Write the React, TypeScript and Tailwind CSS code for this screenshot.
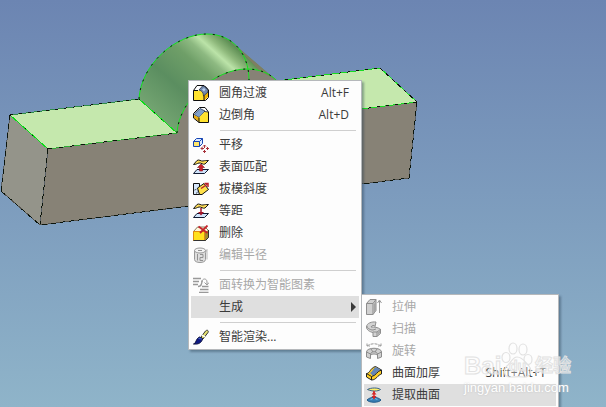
import React from 'react';

interface MenuEntry {
  label: string;
  icon?: React.ReactNode;
  shortcut?: string;
  disabled?: boolean;
  active?: boolean;
  children?: MenuEntry[];
}

const Icon: React.FC<{ children: React.ReactNode }> = ({ children }) => (
  <svg viewBox="0 0 16 16" className="h-4 w-4 shrink-0" fill="none" aria-hidden="true">
    {children}
  </svg>
);

const FilletIcon = () => (
  <Icon>
    <path d="M.5 5.5 5 .5h6l4.500 4.500v7L12 15.500H.5z" fill="#fff" />
    <path d="M1 5.500h5c3 0 4.500 2 4.500 5V15H1z" fill="#ffe22e" />
    <path d="M10.500 10.500 15 6v6l-3.500 3.500h-1z" fill="#f0b400" />
    <path d="M6 5 9.500 1c3.500 0 5.500 2 5.500 6l-4.500 4C10.500 8 9 5.500 6 5z" fill="#7389ae" stroke="#26324a" strokeWidth=".8" />
    <path d="M9 4.500 11 3l1.500 1.500-1.500 2z" fill="#b9cfec" />
    <path d="M.5 15.500v-10L4 .5h7l4.500 4.500v7.500l-3 3zM.5 5.500H5M11 10.500v5" stroke="#0d0d0d" />
  </Icon>
);

const ChamferIcon = () => (
  <Icon>
    <path d="M.5 8.500V6L6 .5h6l3.500 4.500v10.500H6L.5 11z" fill="#fff" />
    <path d="M1 7.500 7 1.500l5 2.500-6 6.500z" fill="#7f9fcb" stroke="#22324f" strokeWidth=".8" />
    <path d="M6 10.500 11.500 5H15v10H6z" fill="#ffe22e" />
    <path d="M1 8l5 2.500V15l-5-4z" fill="#e8ac10" />
    <path d="M.5 11V6.500L6.500.5H12l3.500 4.500v10.500H6zM6 10.500v5" stroke="#0d0d0d" />
    <path d="M11.500 4.500 15 5" stroke="#0d0d0d" strokeWidth=".8" />
  </Icon>
);

const MoveIcon = () => (
  <Icon>
    <path d="M.5 4.500l3-3h6v5l-3 3h-6z" fill="#dceaff" stroke="#1746b4" />
    <path d="M1 5h5v4H1z" fill="#ffe76b" />
    <path d="M.5 4.500h6v5M6.500 4.500l3-3" stroke="#1746b4" />
    <path d="M11.500 8v3M11.500 13v3M8 11.500h3M13 11.500h3" stroke="#a8303a" />
    <path d="M10 9.500 11.500 8 13 9.500M10 14l1.500 1.500L13 14M9.500 10 8 11.500 9.500 13M14 10l1.500 1.500L14 13" stroke="#a8303a" />
  </Icon>
);

const Sheets = () => (
  <>
    <path d="M.5 5.500 4 1.500C6 0 8 2.500 10 2c2-.5 3-.5 5.500-.5L12 5c-2 1-4-1.500-6-1-2 .5-3 1.500-5.500 1.500z" fill="#ffdd57" stroke="#1a1a1a" />
    <path d="M.5 14.500 4 10.500h11.500l-4 4z" fill="#cfe4fb" stroke="#111b33" />
  </>
);

const MatchIcon = () => (
  <Icon>
    <Sheets />
    <path d="M8 5 4.500 8.500h2V12h3V8.500h2z" fill="#c9202b" stroke="#8c101c" strokeWidth=".6" />
  </Icon>
);

const OffsetIcon = () => (
  <Icon>
    <Sheets />
    <path d="M8 5v4" stroke="#a3152a" strokeWidth="1.500" />
    <path d="M5 9h6l-3 3.500z" fill="#a3152a" />
  </Icon>
);

const DraftIcon = () => (
  <Icon>
    <path d="M.5 2.500h6v11h-6z" fill="#d6e7fb" stroke="#111" />
    <path d="M4.500 7 11 2.500l4.500 6-6.500 5H6.500z" fill="#ffe04a" stroke="#111" />
    <path d="M.5 9.500 4 8M3 13.500l2-4" stroke="#111" strokeDasharray="1 1" />
    <path d="M8 7.500 14 3.500M11.500 2.500H15V6" stroke="#b91f2a" strokeWidth="1.500" />
  </Icon>
);

const DeleteIcon = () => (
  <Icon>
    <path d="M.5 6.500 4.500 2H12l3.500 3.500v7l-3 3H.5z" fill="#fff7dc" stroke="#6b5a3a" strokeWidth=".8" />
    <path d="M.5 6.500h11v9H.5z" fill="#ffe01e" stroke="#e08a12" />
    <path d="M12 7l3.500-2v7.500l-3 3H12z" fill="#a08a2e" />
    <path d="M.5 15.500h12l3-3V5" stroke="#333" />
    <path d="M5.500 1.500 14.500 8M14.500.5 7 8" stroke="#c4232a" strokeWidth="1.800" />
  </Icon>
);

const RadiusIcon = () => (
  <Icon>
    <path d="M1.500 3.500v9c0 4 11 4 11 0v-9" fill="#dedede" stroke="#999" />
    <ellipse cx="7" cy="3.500" rx="5.500" ry="2.500" fill="#f4f4f4" stroke="#999" />
    <path d="M4.500 7v6.500M7 7.500h3v3H7v3h3M5 3.500h4" stroke="#929292" />
    <path d="M12.500 6 14 2.500v10" stroke="#bbb" />
  </Icon>
);

const ConvertIcon = () => (
  <Icon>
    <path d="M0 1.500h8M0 4.500h6M0 7.500h5M5 9.500c3 0 4-3 4-6" stroke="#999" strokeWidth="1.400" />
    <path d="M9 5c0-4 5-4 5 0v2M11.500 5.500 14 8l2-2.500" stroke="#999" />
    <path d="M9 9.500h6.500M7 12.500h8.500M6 15.500h9.500" stroke="#999" strokeWidth="1.500" />
  </Icon>
);

const BrushIcon = () => (
  <Icon>
    <path d="M8 8l4.500-6c1.500-1.500 3.500-.5 2.500 1.500L10 10z" fill="#e4e070" stroke="#333" />
    <path d="M9 6l3 2" stroke="#fff" strokeWidth="1.500" />
    <path d="M.5 15c3-1 2-5 6-7l3 2c-1 4-4 5.500-9 5z" fill="#101b85" stroke="#090d3b" />
    <path d="M5.500 9.500 9 10" stroke="#4968d2" />
  </Icon>
);

const ExtrudeIcon = () => (
  <Icon>
    <path d="M.5 4.500 4 .5h6v11l-3 4H.5z" fill="#d0d0d0" stroke="#8d8d8d" />
    <path d="M.5 4.500H7v11M7 4.500l3-4" stroke="#8d8d8d" />
    <path d="M8 5l2-3v9l-2 3z" fill="#a5a5a5" />
    <path d="M13.500 14V2M11.500 4l2-3 2 3" stroke="#999" />
  </Icon>
);

const SweepIcon = () => (
  <Icon>
    <path d="M9 5.500C9 4 6 4 5 6c3 0 7 0 9.500 2.500v4L11 15.500H7v-4C4 11 .5 9 .5 6 .5 2 6 .5 10 1z" fill="#d3d3d3" stroke="#8e8e8e" />
    <path d="M7 11h4v4M11 11l4-3M1 5c0 2 3 4 6 4l3-1" stroke="#8e8e8e" />
    <path d="M12 11l2-2v3l-2 2z" fill="#aaa" />
  </Icon>
);

const RevolveIcon = () => (
  <Icon>
    <path d="M1 3c4-3 10-3 14 0M1 .5V3h3M15 .5V3h-3" stroke="#999" strokeDasharray="3 1" />
    <path d="M.5 9c0-5 15-5 15 0v5l-4 1.500v-3c-1-2-6-2-7 0v3L.5 14z" fill="#d0d0d0" stroke="#8c8c8c" />
    <path d="M.5 9l4 2v4M15.500 9l-4 2v4M4.500 11c1-3 6-3 7 0M5 6l2 3M11 6 9 9" stroke="#8c8c8c" />
  </Icon>
);

const ThickenIcon = () => (
  <Icon>
    <path d="M.5 8.500C4 8.500 4 3 9.500 1.500l6 3.500v4c-4 1-5 6-10 6l-5-3z" fill="#ffcf24" stroke="#222" />
    <path d="M4 8C7 6.500 7 3 10 2l5 3c-4 1-5 5-8 6z" fill="#6485b5" />
    <path d="M.5 8.500 5.500 11.500C10 11 11 6 15.500 5M5.500 11.500V15" stroke="#222" />
  </Icon>
);

const ExtractIcon = () => (
  <Icon>
    <path d="M1.500 2.500C5 .5 12 .5 14.500 2.500 12 4.500 6 4.500 1.500 2.500z" fill="#fff06a" stroke="#39628b" />
    <path d="M1 13c3-3.500 11-3.500 14 0-2 3-12 3-14 0z" fill="#397eb4" stroke="#205b8b" />
    <path d="M4.500 13c1-2 6-2 7 0" stroke="#7cc4ee" />
    <path d="M8 4v8" stroke="#d52626" strokeWidth="1.500" />
    <path d="M5.500 7.500 8 4.500l2.500 3zM5.500 9 8 12l2.500-3z" fill="#d52626" />
  </Icon>
);

const generateMenu: MenuEntry[] = [
  { label: '拉伸', icon: <ExtrudeIcon />, disabled: true },
  { label: '扫描', icon: <SweepIcon />, disabled: true },
  { label: '旋转', icon: <RevolveIcon />, disabled: true },
  { label: '曲面加厚', icon: <ThickenIcon />, shortcut: 'Shift+Alt+T' },
  { label: '提取曲面', icon: <ExtractIcon />, active: true },
];

const menuGroups: MenuEntry[][] = [
  [
    { label: '圆角过渡', icon: <FilletIcon />, shortcut: 'Alt+F' },
    { label: '边倒角', icon: <ChamferIcon />, shortcut: 'Alt+D' },
  ],
  [
    { label: '平移', icon: <MoveIcon /> },
    { label: '表面匹配', icon: <MatchIcon /> },
    { label: '拔模斜度', icon: <DraftIcon /> },
    { label: '等距', icon: <OffsetIcon /> },
    { label: '删除', icon: <DeleteIcon /> },
    { label: '编辑半径', icon: <RadiusIcon />, disabled: true },
  ],
  [
    { label: '面转换为智能图素', icon: <ConvertIcon />, disabled: true },
    { label: '生成', active: true, children: generateMenu },
  ],
  [{ label: '智能渲染...', icon: <BrushIcon /> }],
];

const MenuItem: React.FC<{ entry: MenuEntry }> = ({ entry }) => (
  <li className="relative">
    <button
      type="button"
      disabled={entry.disabled}
      className={`flex h-[22px] w-full items-center gap-[10px] pl-[2px] text-left whitespace-nowrap ${entry.children ? 'pr-[3px]' : 'pr-[10px]'} ${entry.active ? 'bg-[#dfdfdf]' : ''} ${entry.disabled ? 'text-[#a8a8a8]' : 'text-[#3b3b3b]'}`}
    >
      {entry.icon || <span className="w-4 shrink-0" />}
      <span className="flex-1">{entry.label}</span>
      {entry.shortcut && <span>{entry.shortcut}</span>}
      {entry.children && (
        <svg viewBox="0 0 5 10" className="h-[10px] w-[5px]" aria-hidden="true">
          <path d="M0 0l5 5-5 5z" fill="#3b3b3b" />
        </svg>
      )}
    </button>
    {entry.children && (
      <ul className="absolute -top-[2px] left-full ml-[2px] w-[198px] border border-[#b5b8bb] bg-[#fdfdfd] px-[2px] pt-px pb-2 shadow-[2px_2px_2px_rgba(40,60,80,0.4)]">
        {entry.children.map(child => <MenuItem key={child.label} entry={child} />)}
      </ul>
    )}
  </li>
);

const Edge: React.FC<{ d: string; color: string; dash: string }> = ({ d, color, dash }) => (
  <g fill="none" strokeWidth="1">
    <path d={d} stroke={color} />
    <path d={d} stroke="#0b140b" strokeDasharray={dash} />
  </g>
);

const ModelView = () => (
  <svg viewBox="0 0 606 407" width="606" height="407" className="absolute top-0 left-0" role="img" aria-label="零件模型">
    <defs>
      <linearGradient id="cylinder" gradientUnits="userSpaceOnUse" x1="12.700" y1="-14.200" x2="84" y2="-93.800">
        <stop offset="0" stopColor="#73a471" />
        <stop offset="0.330" stopColor="#5b8e60" />
        <stop offset="0.600" stopColor="#6f9f68" />
        <stop offset="0.720" stopColor="#8db981" />
        <stop offset="0.800" stopColor="#bbe3a8" />
        <stop offset="0.870" stopColor="#8fb97c" />
        <stop offset="0.960" stopColor="#5f8f55" />
        <stop offset="1" stopColor="#7d8564" />
      </linearGradient>
    </defs>
    <path d="M10 115 48 149 40 225 1 191z" fill="#94948a" />
    <path d="M48 149 177 133C179 100 215 69 247 69c12 0 22 4 30 11l20 37 120-15-8 76-369 47z" fill="#878276" />
    <path d="M10 115 139 99l38 34-129 16z" fill="#c5e8ad" />
    <path d="M276 81 380 68l37 34-120 15z" fill="#c5e8ad" />
    <path d="M139 99C141 64 176 34 207 34c12 0 20 4 26 9l43 37c-8-7-17-11-29-11-32 0-68 31-70 64z" fill="url(#cylinder)" />
    <path d="M235 45l41 35-16-9z" fill="#7f7e61" />
    <g shapeRendering="crispEdges">
      <Edge d="M10 115 139 99" color="#2f8f4c" dash="3 6" />
      <Edge d="M48 149 177 133" color="#2fae35" dash="4 7" />
      <Edge d="M10 115 48 149M139 99l38 34" color="#08df16" dash="1 9" />
      <Edge d="M276 81 380 68M297 117l120-15" color="#18dc22" dash="3 6" />
      <Edge d="M380 68l37 34" color="#18dc22" dash="4 4" />
      <Edge d="M10 115 1 191M48 149l-8 76M417 102l-8 76" color="#596067" dash="5 4" />
      <Edge d="M1 191 40 225 409 178" color="#55544f" dash="5 4" />
    </g>
    <Edge d="M139 99C141 64 176 34 207 34c25 0 42 19 42 46" color="#12e51c" dash="2 7" />
    <Edge d="M177 133C179 100 215 69 247 69c12 0 22 4 29 11" color="#12e51c" dash="2 7" />
  </svg>
);

const Watermark = () => (
  <div className="pointer-events-none absolute top-[352px] left-[464px] font-['Liberation_Sans','Noto_Sans_CJK_SC',sans-serif] font-bold">
    <svg viewBox="0 0 32 38" className="absolute -top-[10px] left-[37px] h-[38px] w-8" fill="#ffffff55" stroke="#e2e2e2" strokeWidth="1.200" aria-hidden="true">
      <ellipse cx="12" cy="6.500" rx="4" ry="5.500" />
      <ellipse cx="22" cy="7.500" rx="4" ry="5.500" />
      <ellipse cx="5" cy="15.500" rx="4" ry="5" />
      <ellipse cx="27" cy="17.500" rx="4" ry="5" />
      <path d="M16 15c-4 0-5 4-9 8-5 4-5 12 2 12 4 0 9-1 13 0 7 1 10-6 6-11-4-4-6-9-12-9z" />
    </svg>
    <div className="relative flex h-7 items-center text-white/40 [-webkit-text-stroke:1px_#e2e2e2]">
      <span className="w-[45px] text-[24px]">Bai</span>
      <span className="w-[26px] text-[14px]">du</span>
      <span className="text-[18px]">经验</span>
    </div>
    <div className="text-[13px] leading-4 font-normal text-white [text-shadow:0_0_2px_#bbb]">jingyan.baidu.com</div>
  </div>
);

const App: React.FC = () => {
  return (
    <main className="relative h-screen w-full overflow-hidden bg-linear-to-b from-[#6c85b2] to-[#8fb4c9] font-['Open_Sans','Noto_Sans_CJK_SC',sans-serif] text-[12px] leading-4">
      <ModelView />
      <nav className="absolute top-20 left-[188px] w-[174px] border border-[#b5b8bb] bg-[#fdfdfd] px-[2px] py-px shadow-[2px_2px_2px_rgba(40,60,80,0.4)]">
        {menuGroups.map((group, index) => (
          <React.Fragment key={index}>
            {index > 0 && <hr className="mt-1 mr-[3px] mb-[3px] ml-[29px] border-[#cfcfcf]" />}
            <ul>
              {group.map(entry => <MenuItem key={entry.label} entry={entry} />)}
            </ul>
          </React.Fragment>
        ))}
      </nav>
      <Watermark />
    </main>
  );
};

export default App;
